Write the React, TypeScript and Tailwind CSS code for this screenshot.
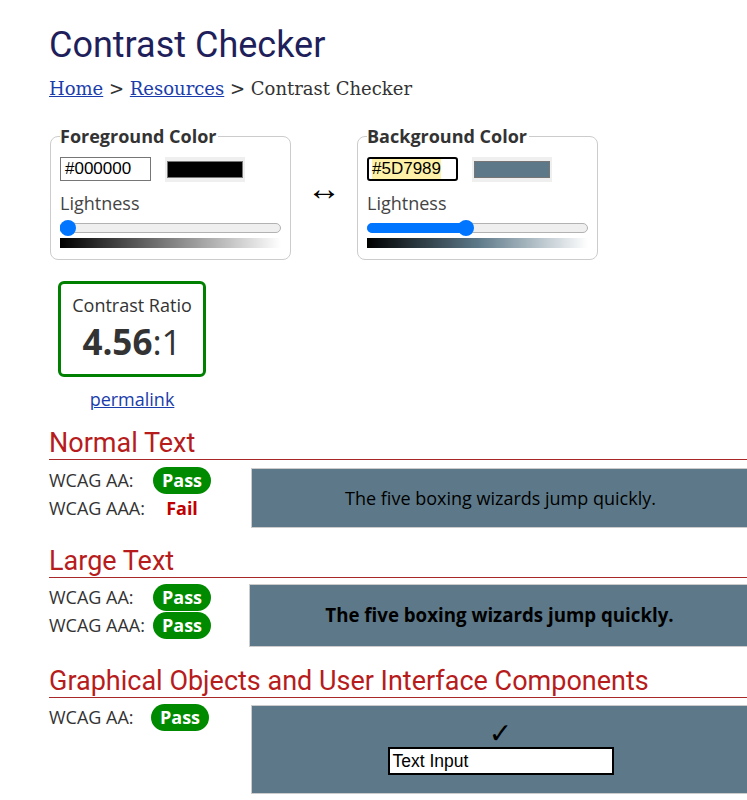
import React from 'react';

const Badge: React.FC<{ pass: boolean }> = ({ pass }) =>
  pass ? (
    <span className="inline-flex h-[27px] w-[58px] items-center justify-center rounded-full bg-[#008a00] text-[18px] font-bold text-white">
      Pass
    </span>
  ) : (
    <span className="inline-flex h-[27px] w-[58px] items-center justify-center text-[18px] font-bold text-[#c00000]">
      Fail
    </span>
  );

const Row: React.FC<{ label: string; pass: boolean; labelW?: string }> = ({ label, pass, labelW = 'w-[104px]' }) => (
  <div className="flex h-[28px] items-start">
    <span className={`${labelW} text-[18px] leading-[27px] text-[#333]`}>{label}</span>
    <Badge pass={pass} />
  </div>
);

const SectionHeading: React.FC<{ children: React.ReactNode }> = ({ children }) => (
  <h2 className="border-b border-[#a8282a] font-['Roboto',sans-serif] text-[27px] leading-[32px] text-[#b71c1c]">
    {children}
  </h2>
);

interface ColorPanelProps {
  title: string;
  hex: string;
  color: string;
  thumb: number;
  gradient: string;
  focused?: boolean;
}

const ColorPanel: React.FC<ColorPanelProps> = ({ title, hex, color, thumb, gradient, focused }) => (
  <fieldset className="w-[241px] rounded-[8px] border border-[#ccc] px-[9px] pt-[10px] pb-[11px]">
    <legend className="pr-[2px] text-[18px] font-bold leading-[22px] text-[#333]">{title}</legend>
    <div className="flex h-[24px] items-center gap-[14px]">
      {focused ? (
        <div className="flex h-[24px] w-[91px] items-center rounded-[3px] border-2 border-black pl-[3px] font-['Liberation_Sans',sans-serif] text-[17px] text-black">
          <span className="bg-[#fff2a8] leading-[20px]">{hex}</span>
        </div>
      ) : (
        <div className="flex h-[24px] w-[91px] items-center border border-[#767676] pl-[4px] font-['Liberation_Sans',sans-serif] text-[17px] text-black">
          {hex}
        </div>
      )}
      <div className="h-[25px] w-[80px] bg-[#efefef] px-[2px] py-[4px]">
        <div className="h-full w-full border border-[#767676]" style={{ backgroundColor: color }} />
      </div>
    </div>
    <div className="mt-[10px] text-[18px] leading-[24px] text-[#444]">Lightness</div>
    <div className="relative mt-[5px] h-[16px]">
      <div className="absolute top-[3px] left-0 right-0 h-[10px] rounded-full border border-[#b2b2b2] bg-[#efefef]" />
      <div
        className="absolute top-[3px] left-0 h-[10px] rounded-full bg-[#0075ff]"
        style={{ width: thumb }}
      />
      <div
        className="absolute top-0 h-[16px] w-[16px] rounded-full bg-[#0075ff]"
        style={{ left: thumb - 8 }}
      />
    </div>
    <div className="mt-[2px] h-[10px] w-full" style={{ background: gradient }} />
  </fieldset>
);

const SampleBox: React.FC<{ className?: string; children: React.ReactNode }> = ({ className = '', children }) => (
  <div className={`mt-[1px] flex flex-1 items-center justify-center border border-[#ccc] bg-[#5d7989] ${className}`}>
    {children}
  </div>
);

export default function App() {
  return (
    <div className="min-h-[800px] overflow-hidden bg-white">
      <div className="w-[750px] pl-[49px] pt-[23px] font-['Open_Sans',sans-serif] text-[#333]">
        <h1 className="font-['Roboto',sans-serif] text-[36px] leading-[44px] text-[#1f1f5c]">Contrast Checker</h1>
        <nav className="mt-[10px] font-['DejaVu_Serif',serif] text-[18px] leading-[24px] text-[#333]">
          <a href="#" className="text-[#1a3dab] underline">Home</a> &gt;{' '}
          <a href="#" className="text-[#1a3dab] underline">Resources</a> &gt; Contrast Checker
        </nav>

        <div className="mt-[24px] ml-[1px] flex items-center">
          <ColorPanel
            title="Foreground Color"
            hex="#000000"
            color="#000000"
            thumb={8}
            gradient="linear-gradient(to right, #000000, #ffffff)"
          />
          <div className="w-[66px] pb-[10px] text-center font-['Liberation_Sans',sans-serif] text-[34px] leading-[40px] text-black">↔</div>
          <ColorPanel
            title="Background Color"
            hex="#5D7989"
            color="#5d7989"
            thumb={99}
            gradient="linear-gradient(to right, #000000, #5d7989, #ffffff)"
            focused
          />
        </div>

        <div className="mt-[21px] ml-[9px] w-[148px]">
          <div className="rounded-[6px] border-[3px] border-[#008000] pt-[9px] pb-[10px] text-center">
            <div className="text-[18px] leading-[24px] text-[#333]">Contrast Ratio</div>
            <div className="mt-[3px] text-[35px] leading-[44px] text-[#333]">
              <span className="font-bold">4.56</span>:1
            </div>
          </div>
          <div className="mt-[10px] text-center text-[18px] leading-[24px]">
            <a href="#" className="text-[#1a3dab] underline">permalink</a>
          </div>
        </div>

        <section className="mt-[16px]">
          <SectionHeading>Normal Text</SectionHeading>
          <div className="mt-[7px] flex">
            <div className="w-[202px]">
              <Row label="WCAG AA:" pass />
              <Row label="WCAG AAA:" pass={false} />
            </div>
            <SampleBox className="h-[60px]">
              <span className="text-[18px] text-black">The five boxing wizards jump quickly.</span>
            </SampleBox>
          </div>
        </section>

        <section className="mt-[17px]">
          <SectionHeading>Large Text</SectionHeading>
          <div className="mt-[6px] flex">
            <div className="w-[200px]">
              <Row label="WCAG AA:" pass />
              <Row label="WCAG AAA:" pass />
            </div>
            <SampleBox className="h-[63px] !mt-0">
              <span className="text-[18.7px] font-bold text-black">The five boxing wizards jump quickly.</span>
            </SampleBox>
          </div>
        </section>

        <section className="mt-[18px]">
          <SectionHeading>Graphical Objects and User Interface Components</SectionHeading>
          <div className="mt-[6px] flex">
            <div className="w-[202px]">
              <Row label="WCAG AA:" pass labelW="w-[102px]" />
            </div>
            <SampleBox className="h-[89px] flex-col !justify-start pt-[15px]">
              <span className="font-['DejaVu_Sans',sans-serif] text-[28px] leading-[26px] text-black">✓</span>
              <div className="flex h-[28px] w-[226px] items-center border-2 border-black bg-white pl-[3px] font-['Liberation_Sans',sans-serif] text-[17.5px] text-black">
                Text Input
              </div>
            </SampleBox>
          </div>
        </section>
      </div>
    </div>
  );
}
